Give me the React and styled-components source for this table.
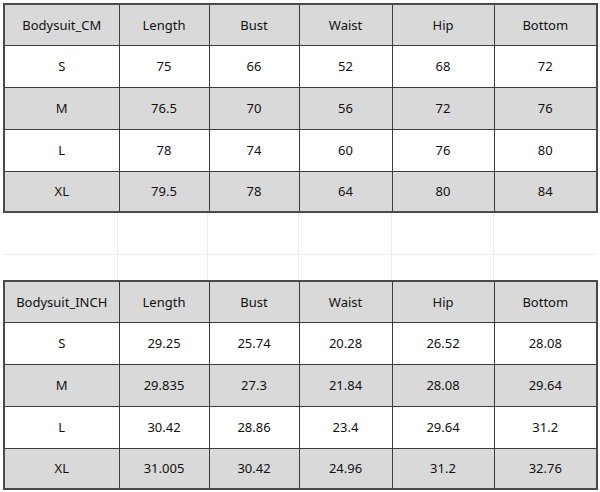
import styled, { createGlobalStyle } from 'styled-components'

const GlobalStyle = createGlobalStyle`
  html, body {
    margin: 0;
    padding: 0;
    background: #ffffff;
  }
  body {
    font-family: "Noto Sans", "Open Sans", "Liberation Sans", sans-serif;
    color: #111111;
  }
`

const COLUMNS = [115, 90, 90, 93, 102, 103]
const LABELS = ['Length', 'Bust', 'Waist', 'Hip', 'Bottom']

const cmRows = [
  ['S', '75', '66', '52', '68', '72'],
  ['M', '76.5', '70', '56', '72', '76'],
  ['L', '78', '74', '60', '76', '80'],
  ['XL', '79.5', '78', '64', '80', '84'],
]

const inchRows = [
  ['S', '29.25', '25.74', '20.28', '26.52', '28.08'],
  ['M', '29.835', '27.3', '21.84', '28.08', '29.64'],
  ['L', '30.42', '28.86', '23.4', '29.64', '31.2'],
  ['XL', '31.005', '30.42', '24.96', '31.2', '32.76'],
]

const SizeChart = ({ title, rows }) => (
  <StyledTable>
    <colgroup>
      {COLUMNS.map((w, i) => <col key={i} style={{ width: w }} />)}
    </colgroup>
    <tbody>
      <StyledRow $shaded $height={41}>
        <StyledCell>{title}</StyledCell>
        {LABELS.map(label => <StyledCell key={label}>{label}</StyledCell>)}
      </StyledRow>
      {rows.map((row, r) => (
        <StyledRow key={row[0]} $shaded={r % 2 === 1} $height={r === 3 ? 41 : 42}>
          {row.map((value, c) => <StyledCell key={c}>{value}</StyledCell>)}
        </StyledRow>
      ))}
    </tbody>
  </StyledTable>
)

// the empty spreadsheet rows between the two charts
const BlankRows = () => (
  <StyledBlank>
    {[42, 25].map((h, r) => (
      <StyledBlankRow key={r} $height={h}>
        {COLUMNS.map((w, i) => <StyledBlankCell key={i} $width={w} />)}
      </StyledBlankRow>
    ))}
  </StyledBlank>
)

export default function App() {
  return (
    <>
      <GlobalStyle />
      <StyledSheet>
        <SizeChart title="Bodysuit_CM" rows={cmRows} />
        <BlankRows />
        <SizeChart title="Bodysuit_INCH" rows={inchRows} />
      </StyledSheet>
    </>
  )
}

const StyledSheet = styled.div`
  width: 600px;
  height: 492px;
  padding: 3px 0 0 3px;
  box-sizing: border-box;
  overflow: hidden;
  display: flex;
  flex-direction: column;
`
const StyledTable = styled.table`
  border-collapse: collapse;
  table-layout: fixed;
  width: 593px;
  border: 2px solid #4a4a4a;
`
const StyledRow = styled.tr`
  height: ${({ $height }) => $height}px;
  background: ${({ $shaded }) => ($shaded ? '#d9d9d9' : '#ffffff')};
`
const StyledCell = styled.td`
  border: 1px solid #3c3c3c;
  padding: 0;
  text-align: center;
  vertical-align: middle;
  font-size: 13px;
  line-height: 16px;
  white-space: nowrap;
`
const StyledBlank = styled.div`
  display: flex;
  flex-direction: column;
  width: 593px;
`
const StyledBlankRow = styled.div`
  display: flex;
  box-sizing: border-box;
  height: ${({ $height }) => $height}px;
  border-bottom: 1px solid #ededed;
  &:last-child {
    border-bottom: none;
  }
`
const StyledBlankCell = styled.div`
  width: ${({ $width }) => $width}px;
  border-right: 1px solid #ededed;
  &:last-child {
    border-right: none;
  }
`
